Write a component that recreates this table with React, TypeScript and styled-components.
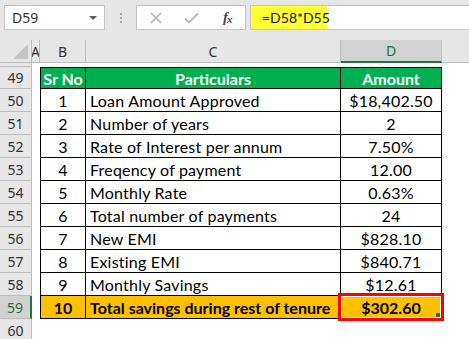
import React from 'react';
import styled, { createGlobalStyle, css } from 'styled-components';

const GlobalStyle = createGlobalStyle`
  html, body {
    margin: 0;
    padding: 0;
    background: #ffffff;
    overflow: hidden;
  }
`;

const COLS = '32px 8px 46px 255px 101px 1fr';

const rows = [
  { n: 50, sr: '1', label: 'Loan Amount Approved', amount: '$18,402.50' },
  { n: 51, sr: '2', label: 'Number of years', amount: '2' },
  { n: 52, sr: '3', label: 'Rate of Interest per annum', amount: '7.50%' },
  { n: 53, sr: '4', label: 'Freqency of payment', amount: '12.00' },
  { n: 54, sr: '5', label: 'Monthly Rate', amount: '0.63%' },
  { n: 55, sr: '6', label: 'Total number of payments', amount: '24' },
  { n: 56, sr: '7', label: 'New EMI', amount: '$828.10' },
  { n: 57, sr: '8', label: 'Existing EMI', amount: '$840.71' },
  { n: 58, sr: '9', label: 'Monthly Savings', amount: '$12.61' },
];

export default function App() {
  return (
    <>
      <GlobalStyle />
      <Window>
        <FormulaBar>
          <NameBox>
            <span>D59</span>
            <Caret />
          </NameBox>
          <Grip>
            <i />
            <i />
            <i />
          </Grip>
          <IconBox>
            <svg width="12" height="12" viewBox="0 0 12 12">
              <path d="M1 1 L11 11 M11 1 L1 11" stroke="#b4b4b4" strokeWidth="1.6" fill="none" />
            </svg>
            <svg width="15" height="12" viewBox="0 0 15 12">
              <path d="M1 6.5 L5 10.5 L14 1.5" stroke="#b4b4b4" strokeWidth="1.8" fill="none" />
            </svg>
            <Fx>
              f<sub>x</sub>
            </Fx>
          </IconBox>
          <Input>
            <Highlight>=D58*D55</Highlight>
          </Input>
        </FormulaBar>

        <Row $h={23}>
          <Corner>
            <svg width="15" height="15" viewBox="0 0 15 15">
              <path d="M15 0 L15 15 L0 15 Z" fill="#c4c4c4" />
            </svg>
          </Corner>
          <ColHead>A</ColHead>
          <ColHead>B</ColHead>
          <ColHead>C</ColHead>
          <ColHead $active>D</ColHead>
          <ColHead $last />
        </Row>

        <Row $h={4}>
          <RowHead />
          <Blank />
          <Blank />
          <Blank />
          <Blank />
          <Blank />
        </Row>

        <Row $h={22}>
          <RowHead>49</RowHead>
          <Blank />
          <Cell $kind="head" $top $first $align="center">Sr No</Cell>
          <Cell $kind="head" $top $align="center">Particulars</Cell>
          <Cell $kind="head" $top $end $align="center">Amount</Cell>
          <Blank />
        </Row>

        {rows.map((r) => (
          <Row key={r.n} $h={23}>
            <RowHead>{r.n}</RowHead>
            <Blank />
            <Cell $first $align="center">{r.sr}</Cell>
            <Cell $align="left">{r.label}</Cell>
            <Cell $end $align="center">{r.amount}</Cell>
            <Blank />
          </Row>
        ))}

        <Row $h={23}>
          <RowHead $active>59</RowHead>
          <Blank />
          <Cell $kind="total" $first $align="center">10</Cell>
          <Cell $kind="total" $align="left">Total savings during rest of tenure</Cell>
          <Cell $kind="total" $end $align="center">
            $302.60
            <Selection>
              <Handle />
            </Selection>
          </Cell>
          <Blank />
        </Row>

        <Row $h={23}>
          <RowHead>60</RowHead>
          <Blank />
          <Blank />
          <Blank />
          <Blank />
          <Blank />
        </Row>
      </Window>
    </>
  );
}

const Window = styled.div`
  width: 469px;
  height: 339px;
  overflow: hidden;
  background: #ffffff;
  display: flex;
  flex-direction: column;
`;

const FormulaBar = styled.div`
  height: 40px;
  flex: none;
  box-sizing: border-box;
  background: #e6e6e6;
  display: flex;
  align-items: flex-start;
  padding: 5px 0 0 4px;
`;

const NameBox = styled.div`
  width: 101px;
  height: 25px;
  box-sizing: border-box;
  background: #ffffff;
  border: 1px solid #c6c6c6;
  display: flex;
  align-items: center;
  justify-content: space-between;
  padding: 0 7px 0 7px;
  font-family: 'Noto Sans', sans-serif;
  font-size: 14px;
  color: #333333;
`;

const Caret = styled.span`
  width: 0;
  height: 0;
  border-left: 4px solid transparent;
  border-right: 4px solid transparent;
  border-top: 4px solid #5a5a66;
  margin-top: 1px;
`;

const Grip = styled.div`
  width: 31px;
  height: 25px;
  display: flex;
  flex-direction: column;
  align-items: center;
  justify-content: center;
  gap: 2px;

  i {
    display: block;
    width: 2px;
    height: 2px;
    background: #a6a6a6;
  }
`;

const IconBox = styled.div`
  width: 110px;
  height: 25px;
  box-sizing: border-box;
  background: #ffffff;
  border: 1px solid #c6c6c6;
  display: flex;
  align-items: center;
  padding: 0 0 0 13px;
  gap: 21px;

  svg:nth-child(2) {
    margin-left: 1px;
  }
`;

const Fx = styled.span`
  font-family: 'Liberation Serif', serif;
  font-style: italic;
  font-weight: 700;
  font-size: 15px;
  color: #4a4a4a;
  margin-left: 3px;
  letter-spacing: -1px;

  sub {
    font-size: 11px;
    vertical-align: -1px;
  }
`;

const Input = styled.div`
  flex: 1;
  margin-left: 4px;
  height: 25px;
  box-sizing: border-box;
  background: #ffffff;
  border: 1px solid #c6c6c6;
  border-right: none;
  display: flex;
`;

const Highlight = styled.div`
  background: #ffff33;
  width: 76px;
  box-sizing: border-box;
  padding-left: 11px;
  display: flex;
  align-items: center;
  font-family: 'Lato', sans-serif;
  font-size: 14px;
  color: #111111;
`;

const Row = styled.div<{ $h: number }>`
  display: grid;
  grid-template-columns: ${COLS};
  height: ${(p) => p.$h}px;
  flex: none;
`;

const Corner = styled.div`
  background: #e6e6e6;
  border-right: 1px solid #bdbdbd;
  border-bottom: 1px solid #bdbdbd;
  box-sizing: border-box;
  display: flex;
  align-items: flex-end;
  justify-content: flex-end;
  padding: 0 3px 3px 0;
`;

const ColHead = styled.div<{ $active?: boolean; $last?: boolean }>`
  box-sizing: border-box;
  background: #e6e6e6;
  border-right: ${(p) => (p.$last ? 'none' : '1px solid #bdbdbd')};
  border-bottom: 1px solid #bdbdbd;
  display: flex;
  align-items: center;
  justify-content: center;
  overflow: hidden;
  font-family: 'Noto Sans', sans-serif;
  font-size: 14px;
  color: #333333;
  ${(p) =>
    p.$active &&
    css`
      background: #d2d2d2;
      color: #217346;
      border-bottom: 2px solid #217346;
    `}
`;

const RowHead = styled.div<{ $active?: boolean }>`
  box-sizing: border-box;
  background: ${(p) => (p.$active ? '#d2d2d2' : '#e6e6e6')};
  border-right: ${(p) => (p.$active ? '2px solid #217346' : '1px solid #bdbdbd')};
  border-bottom: 1px solid #bdbdbd;
  display: flex;
  align-items: center;
  justify-content: center;
  font-family: 'Noto Sans', sans-serif;
  font-size: 14px;
  color: ${(p) => (p.$active ? '#217346' : '#333333')};
`;

const Blank = styled.div`
  background: #ffffff;
`;

const Cell = styled.div<{
  $kind?: 'head' | 'total';
  $align: 'left' | 'center';
  $top?: boolean;
  $first?: boolean;
  $end?: boolean;
}>`
  position: relative;
  box-sizing: border-box;
  border-bottom: 1px solid #000000;
  border-right: 1px solid #000000;
  border-left: ${(p) => (p.$first ? '1px solid #000000' : 'none')};
  border-top: ${(p) => (p.$top ? '1px solid #000000' : 'none')};
  display: flex;
  align-items: center;
  justify-content: ${(p) => (p.$align === 'center' ? 'center' : 'flex-start')};
  padding-left: ${(p) => (p.$align === 'left' ? '4px' : '0')};
  white-space: nowrap;
  font-family: 'Lato', sans-serif;
  font-size: 16px;
  letter-spacing: 0.2px;
  color: #000000;
  background: #ffffff;
  ${(p) =>
    p.$kind === 'head' &&
    css`
      background: #00b050;
      color: #ffffff;
      font-weight: 700;
      letter-spacing: 0;
    `}
  ${(p) =>
    p.$kind === 'total' &&
    css`
      background: #ffc000;
      font-weight: 700;
      letter-spacing: 0;
    `}
`;

const Selection = styled.div`
  position: absolute;
  left: -3px;
  top: -3px;
  right: -3px;
  bottom: -3px;
  border: 3px solid #ff0000;
  box-shadow: inset 0 0 0 1px #ffffff;
  pointer-events: none;
`;

const Handle = styled.div`
  position: absolute;
  right: 1px;
  bottom: 1px;
  width: 4px;
  height: 4px;
  background: #217346;
`;
